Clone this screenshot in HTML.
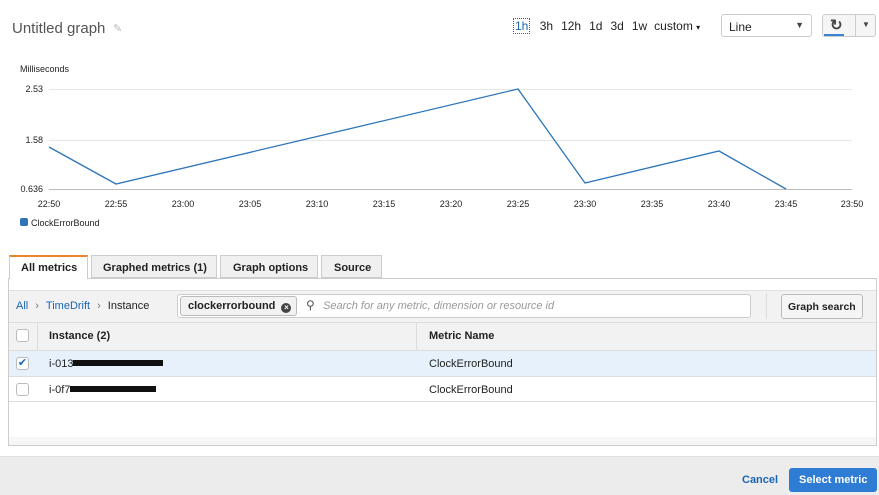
<!DOCTYPE html>
<html><head><meta charset="utf-8"><style>
*{box-sizing:border-box;margin:0;padding:0}
body{width:879px;height:495px;overflow:hidden;background:#fff;font-family:"Liberation Sans",Arial,sans-serif;color:#222;position:relative}
.a{position:absolute}
.t{font-size:11px;color:#222}
.cb{position:absolute;width:13px;height:13px;border:1px solid #bbb;border-radius:3px;background:#fff}
</style></head><body>
<div class="a" style="left:12px;top:20px;font-size:15px;color:#555">Untitled graph</div>
<div class="a" style="left:113px;top:22px;font-size:11px;color:#bbb">✎</div>
<div class="a t" style="left:513px;top:19px;font-size:12px;word-spacing:0">
<span style="color:#1a66b3;border:1px dotted #1a66b3;padding:0 1px">1h</span>
<span style="margin-left:6px">3h</span><span style="margin-left:8px">12h</span><span style="margin-left:8px">1d</span><span style="margin-left:8px">3d</span><span style="margin-left:8px">1w</span><span style="margin-left:7px">custom <span style="font-size:8px">▾</span></span></div>
<div class="a" style="left:721px;top:14px;width:91px;height:23px;border:1px solid #ccc;border-radius:3px;font-size:12px;padding:5px 7px">Line<span style="position:absolute;right:7px;top:5px;font-size:9px;color:#444">▼</span></div>
<div class="a" style="left:822px;top:14px;width:54px;height:23px;border:1px solid #ccc;border-radius:3px;background:#f5f5f5"></div>
<div class="a" style="left:855px;top:15px;width:1px;height:21px;background:#ccc"></div>
<div class="a" style="left:824px;top:34px;width:20px;height:2px;background:#3c82d0"></div>
<div class="a" style="left:830px;top:16px;font-size:15px;font-weight:bold;color:#444">↻</div>
<div class="a" style="left:862px;top:20px;font-size:8px;color:#444">▼</div>
<div class="a" style="left:20px;top:64px;font-size:9px">Milliseconds</div>
<svg class="a" style="left:0;top:0" width="879" height="240">
<g stroke="#e6e6e6" stroke-width="1"><line x1="49" y1="89.5" x2="852" y2="89.5"/><line x1="49" y1="140.5" x2="852" y2="140.5"/></g>
<line x1="49" y1="189.5" x2="852" y2="189.5" stroke="#bbb"/>
<polyline fill="none" stroke="#2d75b8" stroke-width="1.3" points="49,147 116,184 518,89 585,183 719,151 786,189"/>
<g font-size="9" fill="#222" font-family="Liberation Sans"><text x="43" y="92" text-anchor="end">2.53</text><text x="43" y="143" text-anchor="end">1.58</text><text x="43" y="192" text-anchor="end">0.636</text>
<g text-anchor="middle"><text x="49" y="207">22:50</text><text x="116" y="207">22:55</text><text x="183" y="207">23:00</text><text x="250" y="207">23:05</text><text x="317" y="207">23:10</text><text x="384" y="207">23:15</text><text x="451" y="207">23:20</text><text x="518" y="207">23:25</text><text x="585" y="207">23:30</text><text x="652" y="207">23:35</text><text x="719" y="207">23:40</text><text x="786" y="207">23:45</text><text x="852" y="207">23:50</text></g>
<text x="31" y="226">ClockErrorBound</text></g>
<rect x="20" y="218" width="8" height="8" rx="2" fill="#2d75b8"/>
<text x="442" y="249" font-size="8" fill="#888" text-anchor="middle">...</text>
</svg>
<div class="a" style="left:8px;top:278px;width:869px;height:168px;border:1px solid #ccc;background:#fff"></div>
<div class="a" style="left:9px;top:255px;width:79px;height:24px;border:1px solid #ccc;border-top:2px solid #e8862f;border-bottom:none;background:#fff;font-size:11px;font-weight:bold;padding:5px 0 0 11px">All metrics</div>
<div class="a" style="left:91px;top:255px;width:126px;height:23px;border:1px solid #ccc;background:#f0f0f0;font-size:11px;font-weight:bold;padding:6px 0 0 11px">Graphed metrics (1)</div>
<div class="a" style="left:220px;top:255px;width:98px;height:23px;border:1px solid #ccc;background:#f0f0f0;font-size:11px;font-weight:bold;padding:6px 0 0 12px">Graph options</div>
<div class="a" style="left:321px;top:255px;width:61px;height:23px;border:1px solid #ccc;background:#f0f0f0;font-size:11px;font-weight:bold;padding:6px 0 0 12px">Source</div>
<div class="a" style="left:9px;top:290px;width:867px;height:32px;background:#f2f2f2;border-top:1px solid #e0e0e0"></div>
<div class="a" style="left:16px;top:300px;font-size:11px"><span style="color:#1a66b3">All</span><span style="color:#777;margin:0 7px">›</span><span style="color:#1a66b3">TimeDrift</span><span style="color:#777;margin:0 7px">›</span>Instance</div>
<div class="a" style="left:177px;top:294px;width:574px;height:24px;border:1px solid #ccc;border-radius:3px;background:#fff"></div>
<div class="a" style="left:180px;top:296px;width:117px;height:20px;border:1px solid #bbb;border-radius:3px;background:#f2f2f2;font-size:11px;font-weight:bold;padding:3px 0 0 7px">clockerrorbound <span style="display:inline-block;width:10px;height:10px;border-radius:50%;background:#444;color:#fff;font-size:8px;text-align:center;line-height:10px;vertical-align:-1px;margin-left:3px">×</span></div>
<div class="a" style="left:306px;top:298px;font-size:12px;color:#555">⚲</div>
<div class="a" style="left:323px;top:300px;font-size:11px;font-style:italic;color:#999">Search for any metric, dimension or resource id</div>
<div class="a" style="left:766px;top:293px;width:1px;height:26px;background:#ddd"></div>
<div class="a" style="left:781px;top:294px;width:82px;height:25px;border:1px solid #bbb;border-radius:3px;background:#f5f5f5;font-size:10.5px;font-weight:bold;padding:6px 0 0 6px">Graph search</div>
<div class="a" style="left:9px;top:322px;width:867px;height:29px;background:#f2f2f2;border-top:1px solid #ddd;border-bottom:1px solid #ddd"></div>
<div class="a" style="left:37px;top:323px;width:1px;height:27px;background:#ddd"></div>
<div class="a" style="left:416px;top:323px;width:1px;height:27px;background:#ddd"></div>
<div class="cb" style="left:16px;top:329px"></div>
<div class="a" style="left:49px;top:330px;font-size:11px;font-weight:bold">Instance (2)</div>
<div class="a" style="left:429px;top:330px;font-size:11px;font-weight:bold">Metric Name</div>
<div class="a" style="left:9px;top:351px;width:867px;height:26px;background:#e6f1fb;border-bottom:1px solid #ddd"></div>
<div class="cb" style="left:16px;top:357px;font-size:11px;color:#1a66b3;line-height:11px;text-align:center">✔</div>
<div class="a t" style="left:49px;top:358px">i-013<span style="display:inline-block;width:90px;height:6px;background:#111;vertical-align:1px"></span></div>
<div class="a t" style="left:429px;top:358px">ClockErrorBound</div>
<div class="a" style="left:9px;top:377px;width:867px;height:25px;border-bottom:1px solid #ddd"></div>
<div class="cb" style="left:16px;top:383px"></div>
<div class="a t" style="left:49px;top:384px">i-0f7<span style="display:inline-block;width:86px;height:6px;background:#111;vertical-align:1px"></span></div>
<div class="a t" style="left:429px;top:384px">ClockErrorBound</div>
<div class="a" style="left:9px;top:437px;width:867px;height:8px;background:#f6f6f6"></div>
<div class="a" style="left:0;top:456px;width:879px;height:39px;background:#ececec;border-top:1px solid #e0e0e0"></div>
<div class="a" style="left:742px;top:474px;font-size:11px;font-weight:bold;color:#1a66b3">Cancel</div>
<div class="a" style="left:789px;top:468px;width:88px;height:24px;border-radius:3px;background:#2f7cd4;color:#fff;font-size:11px;font-weight:bold;padding:6px 0 0 10px">Select metric</div>
</body></html>
